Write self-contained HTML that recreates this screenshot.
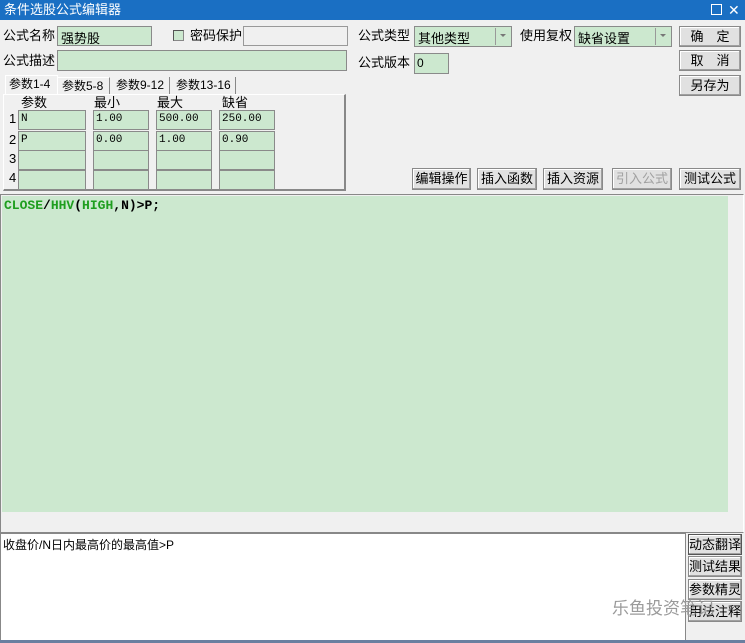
<!DOCTYPE html><html><head><meta charset="utf-8"><style>
*{box-sizing:border-box;margin:0;padding:0}
body{width:745px;height:643px;background:#f0f0f0;font:12px "Liberation Sans","Noto Sans CJK SC",sans-serif;color:#000;position:relative;overflow:hidden}
.a{position:absolute}
.g{background:#cce8cf;border:1px solid #8a8a8a}
.l{position:absolute;font-size:13px;line-height:14px}
.b{position:absolute;background:#e1e1e1;border:1px solid #8a8a8a;box-shadow:inset -1px -1px #a0a0a0,inset 1px 1px #fff;text-align:center;font-size:13px}
.m{font-family:"Liberation Mono",monospace;font-size:11px;padding-left:2px;line-height:16px}
</style></head><body>
<div class="a" style="left:0;top:0;width:745px;height:20px;background:#1a6fc3;color:#fff;font-size:13px;line-height:20px;padding-left:4px">条件选股公式编辑器</div>
<div class="a" style="left:711px;top:4px;width:11px;height:11px;border:1px solid #fff"></div>
<div class="a" style="left:728px;top:0;color:#fff;font-size:14px;line-height:20px">✕</div>

<div class="l" style="left:3px;top:29px">公式名称</div>
<div class="a g" style="left:57px;top:26px;width:95px;height:20px;padding:1px 3px;font-size:13px">强势股</div>
<div class="a" style="left:173px;top:30px;width:11px;height:11px;background:#cce8cf;border:1px solid #888;border-top-color:#555;border-left-color:#555"></div>
<div class="l" style="left:190px;top:29px">密码保护</div>
<div class="a" style="left:243px;top:26px;width:105px;height:20px;border:1px solid #999;background:#f0f0f0"></div>
<div class="l" style="left:3px;top:54px">公式描述</div>
<div class="a g" style="left:57px;top:50px;width:290px;height:21px"></div>

<div class="l" style="left:358px;top:29px">公式类型</div>
<div class="a g" style="left:414px;top:26px;width:98px;height:21px;padding:1px 3px;font-size:13px">其他类型</div>
<div class="a" style="left:495px;top:28px;width:1px;height:17px;background:#999"></div>
<div class="a" style="left:500px;top:34px;border:3px solid transparent;border-top:3px solid #777"></div>
<div class="l" style="left:520px;top:29px">使用复权</div>
<div class="a g" style="left:574px;top:26px;width:98px;height:21px;padding:1px 3px;font-size:13px">缺省设置</div>
<div class="a" style="left:655px;top:28px;width:1px;height:17px;background:#999"></div>
<div class="a" style="left:660px;top:34px;border:3px solid transparent;border-top:3px solid #777"></div>
<div class="l" style="left:358px;top:56px">公式版本</div>
<div class="a g" style="left:414px;top:53px;width:35px;height:21px;padding:2px 2px">0</div>

<div class="b" style="left:679px;top:26px;width:62px;height:21px;line-height:19px">确　定</div>
<div class="b" style="left:679px;top:50px;width:62px;height:21px;line-height:19px">取　消</div>
<div class="b" style="left:679px;top:75px;width:62px;height:21px;line-height:19px">另存为</div>

<div class="a" style="left:5px;top:75px;width:53px;height:20px;background:#f0f0f0;border:1px solid #fff;border-bottom:none;line-height:17px;padding-left:3px">参数1-4</div>
<div class="a" style="left:58px;top:77px;width:52px;height:17px;border-right:1px solid #888;border-top:1px solid #fff;line-height:16px;padding-left:4px">参数5-8</div>
<div class="a" style="left:110px;top:77px;width:60px;height:17px;border-right:1px solid #888;line-height:16px;padding-left:6px">参数9-12</div>
<div class="a" style="left:170px;top:77px;width:66px;height:17px;border-right:1px solid #888;line-height:16px;padding-left:6px">参数13-16</div>
<div class="a" style="left:3px;top:94px;width:343px;height:97px;border:1px solid #fff;border-right:2px solid #888;border-bottom:2px solid #888"></div>
<div class="l" style="left:21px;top:96px">参数</div><div class="l" style="left:94px;top:96px">最小</div><div class="l" style="left:157px;top:96px">最大</div><div class="l" style="left:222px;top:96px">缺省</div>
<div class="l" style="left:9px;top:112px">1</div><div class="l" style="left:9px;top:133px">2</div><div class="l" style="left:9px;top:152px">3</div><div class="l" style="left:9px;top:171px">4</div>
<div class="a g m" style="left:18px;top:110px;width:68px;height:20px">N</div>
<div class="a g m" style="left:93px;top:110px;width:56px;height:20px">1.00</div>
<div class="a g m" style="left:156px;top:110px;width:56px;height:20px">500.00</div>
<div class="a g m" style="left:219px;top:110px;width:56px;height:20px">250.00</div>
<div class="a g m" style="left:18px;top:131px;width:68px;height:20px">P</div>
<div class="a g m" style="left:93px;top:131px;width:56px;height:20px">0.00</div>
<div class="a g m" style="left:156px;top:131px;width:56px;height:20px">1.00</div>
<div class="a g m" style="left:219px;top:131px;width:56px;height:20px">0.90</div>
<div class="a g" style="left:18px;top:150px;width:68px;height:20px"></div><div class="a g" style="left:93px;top:150px;width:56px;height:20px"></div><div class="a g" style="left:156px;top:150px;width:56px;height:20px"></div><div class="a g" style="left:219px;top:150px;width:56px;height:20px"></div>
<div class="a g" style="left:18px;top:170px;width:68px;height:20px"></div><div class="a g" style="left:93px;top:170px;width:56px;height:20px"></div><div class="a g" style="left:156px;top:170px;width:56px;height:20px"></div><div class="a g" style="left:219px;top:170px;width:56px;height:20px"></div>

<div class="b" style="left:412px;top:168px;width:59px;height:22px;line-height:20px">编辑操作</div>
<div class="b" style="left:477px;top:168px;width:60px;height:22px;line-height:20px">插入函数</div>
<div class="b" style="left:543px;top:168px;width:60px;height:22px;line-height:20px">插入资源</div>
<div class="b" style="left:612px;top:168px;width:60px;height:22px;line-height:20px;color:#a0a0a0">引入公式</div>
<div class="b" style="left:679px;top:168px;width:62px;height:22px;line-height:20px">测试公式</div>

<div class="a" style="left:0;top:194px;width:744px;height:339px;border:1px solid #888;border-right-color:#fff;border-bottom-color:#888;background:#f0f0f0"></div>
<div class="a" style="left:2px;top:196px;width:726px;height:316px;background:#cce8cf;padding:2px 2px;font:bold 13px 'Liberation Mono',monospace;color:#1e9e1e">CLOSE<span style="color:#000">/</span>HHV<span style="color:#000">(</span>HIGH<span style="color:#000">,N)&gt;P;</span></div>

<div class="a" style="left:0;top:533px;width:686px;height:108px;background:#fff;border:1px solid #888;padding:2px 2px;font-size:12px">收盘价/N日内最高价的最高值&gt;P</div>
<div class="b" style="left:688px;top:534px;width:54px;height:21px;line-height:19px;border-color:#555">动态翻译</div>
<div class="b" style="left:688px;top:556px;width:54px;height:21px;line-height:19px">测试结果</div>
<div class="b" style="left:688px;top:579px;width:54px;height:21px;line-height:19px">参数精灵</div>
<div class="b" style="left:688px;top:601px;width:54px;height:21px;line-height:19px">用法注释</div>
<div class="a" style="left:612px;top:598px;font-size:17px;color:#9a9a9a;line-height:22px">乐鱼投资笔记</div>
<div class="a" style="left:0;top:640px;width:745px;height:3px;background:#6a7fa0"></div>
</body></html>
